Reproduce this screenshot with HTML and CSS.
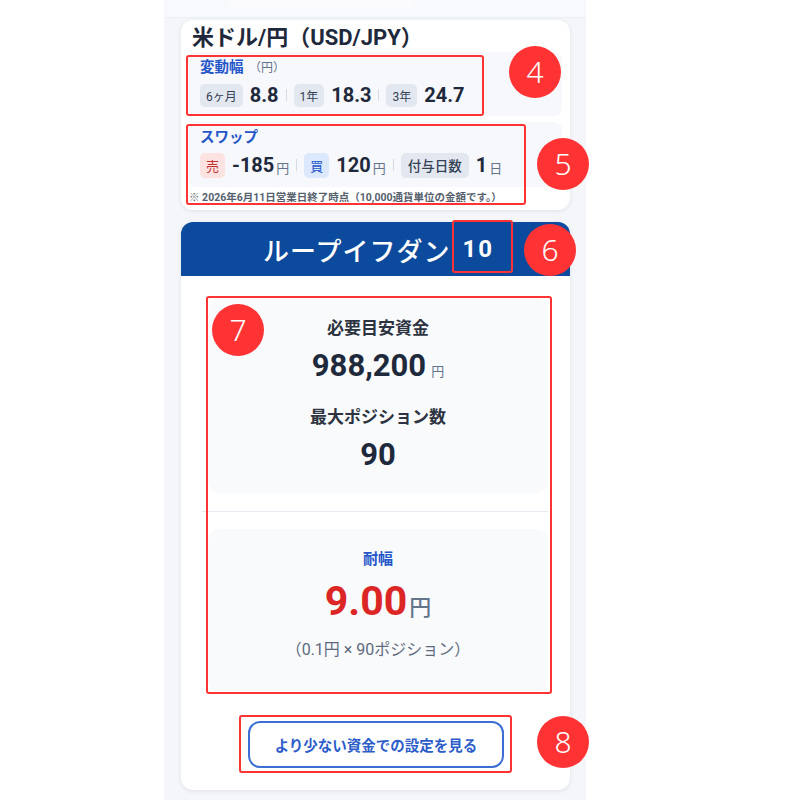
FILE: index.html
```html
<!DOCTYPE html>
<html lang="ja">
<head>
    <meta charset="UTF-8">
    <meta name="viewport" content="width=device-width, initial-scale=1.0">
    <title>米ドル/円 ループイフダン</title>
    <link rel="stylesheet" href="styles.css">
</head>
<body>
    <div class="phone">
        <div class="top-strip"><div class="top-tab"></div></div>

        <div class="card pair-card">
            <h1 class="pair-title">米ドル/円（USD/JPY）</h1>

            <div class="info-box range-box">
                <div class="info-label">変動幅 <span class="unit-note">（円）</span></div>
                <div class="info-row">
                    <span class="pill">6ヶ月</span><span class="val">8.8</span>
                    <span class="sep"></span>
                    <span class="pill">1年</span><span class="val">18.3</span>
                    <span class="sep"></span>
                    <span class="pill">3年</span><span class="val">24.7</span>
                </div>
                <span class="mark mark-4"></span>
            </div>

            <div class="info-box swap-box">
                <div class="info-label">スワップ</div>
                <div class="info-row">
                    <span class="pill pill-sell">売</span><span class="val">-185</span><span class="yen">円</span>
                    <span class="sep"></span>
                    <span class="pill pill-buy">買</span><span class="val">120</span><span class="yen">円</span>
                    <span class="sep"></span>
                    <span class="pill pill-wide">付与日数</span><span class="val">1</span><span class="yen">日</span>
                </div>
            </div>
            <p class="footnote">※ 2026年6月11日営業日終了時点（10,000通貨単位の金額です。）</p>
            <span class="mark mark-5"></span>
        </div>

        <div class="card loop-card">
            <div class="loop-head">
                <span class="loop-name">ループイフダン</span><span class="loop-num">10</span>
                <span class="mark mark-6"></span>
            </div>

            <div class="loop-body">
                <div class="stat-box">
                    <div class="stat-label">必要目安資金</div>
                    <div class="stat-value">988,200<span class="yen">円</span></div>
                    <div class="stat-label">最大ポジション数</div>
                    <div class="stat-value">90</div>
                </div>
                <hr class="divider">
                <div class="stat-box width-box">
                    <div class="width-label">耐幅</div>
                    <div class="width-value">9.00<span class="yen">円</span></div>
                    <div class="width-note">（0.1円 × 90ポジション）</div>
                </div>
                <span class="mark mark-7"></span>

                <div class="btn-wrap">
                    <button class="less-btn">より少ない資金での設定を見る</button>
                    <span class="mark mark-8"></span>
                </div>
            </div>
        </div>

        <!-- annotation numbers -->
        <span class="badge badge-4">4</span>
        <span class="badge badge-5">5</span>
        <span class="badge badge-6">6</span>
        <span class="badge badge-7">7</span>
        <span class="badge badge-8">8</span>
    </div>
</body>
</html>
```

FILE: styles.css
```css
body {
    margin: 0;
    background-color: #fff;
    font-family: Roboto, "Noto Sans CJK JP", sans-serif;
    color: #1e293b;
}
.phone {
    position: relative;
    width: 422px;
    height: 800px;
    margin-left: 164px;
    background-color: #f4f6fa;
}
.top-strip {
    height: 17px;
    background-color: #f8f9fc;
    border-bottom: 1px solid #eceef5;
    margin-bottom: 2px;
}
.top-tab {
    width: 185px;
    height: 8px;
    margin-left: 66px;
    background-color: #fbfbfd;
    border-radius: 0 0 8px 8px;
}
.card {
    position: relative;
    margin: 0 16px 0 17px;
    background-color: #fff;
    border-radius: 12px;
    box-shadow: 0 1px 4px rgba(30, 41, 59, 0.10);
}
.pair-card {
    padding: 4px 8px 6px 7px;
}
.pair-title {
    margin: 0 0 0 4px;
    font-size: 22px;
    line-height: 28px;
    font-weight: 700;
    color: #1e293b;
}
.info-box {
    position: relative;
    background-color: #f6f8fb;
    border-radius: 8px;
    padding: 6px 12px;
}
.range-box {
    height: 52px;
}
.swap-box {
    margin-top: 6px;
    height: 53px;
}
.info-label {
    font-size: 14.5px;
    line-height: 20px;
    font-weight: 700;
    color: #2556c9;
}
.unit-note {
    font-size: 12px;
    font-weight: 400;
    color: #64748b;
    margin-left: 2px;
}
.info-row {
    display: flex;
    align-items: center;
    margin-top: 5px;
    height: 24px;
}
.pill {
    display: inline-flex;
    align-items: center;
    height: 23px;
    padding: 0 6px;
    border-radius: 5px;
    background-color: #e3e8f0;
    font-size: 12px;
    color: #334155;
    margin-right: 7px;
}
.pill-sell {
    background-color: #fde2e2;
    color: #c53030;
    font-size: 13px;
    height: 25px;
}
.pill-buy {
    background-color: #dbe8fd;
    color: #2556c9;
    font-size: 13px;
    height: 25px;
}
.pill-wide {
    font-size: 13.5px;
    height: 25px;
    padding: 0 7px;
    font-weight: 500;
}
.val {
    font-size: 20px;
    font-weight: 700;
    color: #1e293b;
}
.info-row .yen {
    font-size: 13px;
    color: #64748b;
    margin-left: 2px;
    margin-top: 4px;
}
.sep {
    width: 1px;
    height: 12px;
    background-color: #d5dbe3;
    margin: 0 7px;
}
.footnote {
    margin: 4px 0 0 1px;
    font-size: 10.5px;
    line-height: 13px;
    font-weight: 700;
    color: #555f6d;
}
.loop-card {
    margin-top: 12px;
    height: 568px;
}
.loop-head {
    position: relative;
    height: 54px;
    background-color: #0b4a9c;
    border-radius: 12px 12px 0 0;
    display: flex;
    align-items: center;
    justify-content: center;
    color: #fff;
    padding-left: 6px;
}
.loop-name {
    font-size: 26px;
    font-weight: 500;
    letter-spacing: 1px;
}
.loop-num {
    font-size: 24px;
    font-weight: 700;
    letter-spacing: 2px;
    margin-left: 12px;
}
.loop-body {
    position: relative;
    padding: 22px 22px 0 27px;
}
.stat-box {
    background-color: #f8fafc;
    border-radius: 12px;
    padding: 19px 0 16px;
    text-align: center;
}
.stat-label {
    font-size: 17px;
    line-height: 22px;
    font-weight: 700;
    color: #2d3340;
}
.stat-value {
    font-size: 31px;
    line-height: 44px;
    font-weight: 700;
    color: #1e293b;
    margin: 5px 0 12px;
}
.stat-value:last-child {
    margin-bottom: 0;
}
.stat-value .yen {
    font-size: 13px;
    font-weight: 400;
    color: #64748b;
    margin-left: 5px;
}
.divider {
    border: none;
    border-top: 1px solid #e8ebf0;
    margin: 18px 0 17px -6px;
}
.width-box {
    padding: 20px 0 31px;
}
.width-label {
    font-size: 15px;
    line-height: 20px;
    font-weight: 700;
    color: #2556c9;
}
.width-value {
    font-size: 41px;
    line-height: 52px;
    font-weight: 700;
    color: #dc2626;
    margin-top: 6px;
}
.width-value .yen {
    font-size: 22px;
    font-weight: 500;
    color: #64748b;
    margin-left: 2px;
}
.width-note {
    font-size: 16px;
    line-height: 22px;
    color: #5f6b7d;
    margin-top: 5px;
}
.btn-wrap {
    position: relative;
    display: flex;
    justify-content: center;
    margin-top: 29px;
    padding-right: 4px;
}
.less-btn {
    width: 256px;
    height: 47px;
    background-color: #fff;
    border: 2px solid #3b6fd4;
    border-radius: 12px;
    font-family: inherit;
    font-size: 14.5px;
    font-weight: 700;
    color: #2c5dc9;
}

/* annotation overlay */
.mark {
    position: absolute;
    border: 2px solid #ff3333;
    border-radius: 3px;
    pointer-events: none;
}
.mark-4 {
    left: -2px;
    top: 3px;
    width: 294px;
    height: 57px;
}
.mark-5 {
    left: 5px;
    top: 104px;
    width: 336px;
    height: 77px;
}
.mark-6 {
    left: 271px;
    top: -2px;
    width: 57px;
    height: 49px;
}
.mark-7 {
    left: 25px;
    top: 20px;
    width: 342px;
    height: 394px;
}
.mark-8 {
    left: 31px;
    top: -6px;
    width: 269px;
    height: 54px;
}
.badge {
    position: absolute;
    width: 52px;
    height: 52px;
    border-radius: 50%;
    background-color: #ff3333;
    color: #fff;
    font-family: "Noto Sans", sans-serif;
    font-size: 30px;
    font-weight: 300;
    line-height: 52px;
    text-align: center;
}
.badge-4 { left: 345px; top: 46px; }
.badge-5 { left: 373px; top: 138px; }
.badge-6 { left: 360px; top: 224px; }
.badge-7 { left: 48px; top: 304px; }
.badge-8 { left: 373px; top: 716px; }
```
